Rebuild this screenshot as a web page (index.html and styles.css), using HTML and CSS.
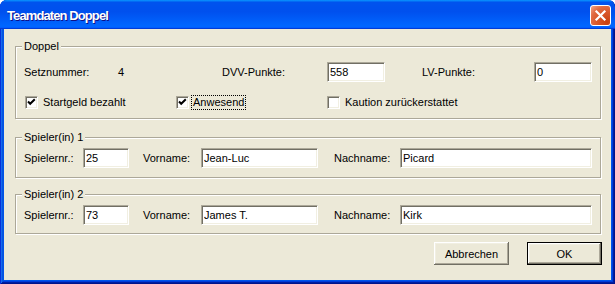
FILE: index.html
```html
<!DOCTYPE html>
<html lang="de">
<head>
<meta charset="utf-8">
<title>Teamdaten Doppel</title>
<link rel="stylesheet" href="styles.css">
</head>
<body>
<div class="window">
  <div class="titlebar">
    <span class="title">Teamdaten Doppel</span>
    <span class="close" aria-label="Schließen">
      <svg viewBox="0 0 21 21" width="21" height="21"><path d="M6.5 6.5 L14.5 14.5 M14.5 6.5 L6.5 14.5" stroke="#fff" stroke-width="2.2" stroke-linecap="square" fill="none"/></svg>
    </span>
  </div>
  <div class="client">
    <fieldset class="group g-doppel">
      <legend>Doppel</legend>
      <div class="row-points">
        <span class="lbl">Setznummer:</span>
        <span class="lbl">4</span>
        <span class="lbl">DVV-Punkte:</span>
        <input class="field w58" type="text" value="558">
        <span class="lbl">LV-Punkte:</span>
        <input class="field w58" type="text" value="0">
      </div>
      <div class="row-checks">
        <label class="check">
          <span class="box"><svg viewBox="0 0 11 11" width="11" height="11"><path d="M2 4.5 L4.2 6.8 L8.8 2.2" stroke="#000" stroke-width="2" fill="none"/></svg></span>
          <span class="text">Startgeld bezahlt</span>
        </label>
        <label class="check">
          <span class="box"><svg viewBox="0 0 11 11" width="11" height="11"><path d="M2 4.5 L4.2 6.8 L8.8 2.2" stroke="#000" stroke-width="2" fill="none"/></svg></span>
          <span class="text focus">Anwesend</span>
        </label>
        <label class="check">
          <span class="box"></span>
          <span class="text">Kaution zurückerstattet</span>
        </label>
      </div>
    </fieldset>

    <fieldset class="group g-p1">
      <legend>Spieler(in) 1</legend>
      <div class="row-player">
        <span class="lbl">Spielernr.:</span>
        <input class="field w46" type="text" value="25">
        <span class="lbl">Vorname:</span>
        <input class="field w117" type="text" value="Jean-Luc">
        <span class="lbl">Nachname:</span>
        <input class="field w192" type="text" value="Picard">
      </div>
    </fieldset>

    <fieldset class="group g-p2">
      <legend>Spieler(in) 2</legend>
      <div class="row-player">
        <span class="lbl">Spielernr.:</span>
        <input class="field w46" type="text" value="73">
        <span class="lbl">Vorname:</span>
        <input class="field w117" type="text" value="James T.">
        <span class="lbl">Nachname:</span>
        <input class="field w192" type="text" value="Kirk">
      </div>
    </fieldset>

    <div class="buttons">
      <button class="btn" type="button">Abbrechen</button>
      <button class="btn btn-default" type="button">OK</button>
    </div>
  </div>
</div>
</body>
</html>
```
FILE: styles.css
```css
* { box-sizing: border-box; }
html, body { margin: 0; padding: 0; }
body {
  width: 615px;
  height: 284px;
  overflow: hidden;
  background: #fff;
  font-family: "Liberation Sans", Arial, sans-serif;
  font-size: 11px;
  color: #000;
}

.window {
  width: 615px;
  height: 284px;
  display: flex;
  flex-direction: column;
  background: #0055EA;
  border-radius: 7px 7px 0 0;
  box-shadow: inset 1px 0 #0831D9, inset -1px -1px #00138C, inset 2px 0 #166AEE, inset -2px -2px #001EA0, inset 3px 0 #0855DD, inset -3px -3px #003BDA;
}

.titlebar {
  height: 29px;
  flex: none;
  display: flex;
  align-items: center;
  justify-content: space-between;
  padding: 2px 4px 0 7px;
  border-radius: 7px 7px 0 0;
  background: linear-gradient(180deg, #0997FF, #0053EE 8%, #0050EE 40%, #0066FF 88%, #0066FF 93%, #005BFF 95%, #003DD7 96%, #003DD7);
}

.title {
  color: #fff;
  font-family: "Liberation Sans", Arial, sans-serif;
  font-weight: bold;
  font-size: 13px;
  letter-spacing: -0.9px;
  line-height: 15px;
  text-shadow: 1px 1px #0F1089;
}

.close {
  width: 21px;
  height: 21px;
  display: flex;
  border: 1px solid #fff;
  border-radius: 3px;
  background: radial-gradient(circle at 85% 85%, #C9410F 0%, #D9582A 45%, #E06B43 70%, #F4A88A 100%);
}
.close svg { margin: -1px; }

.client {
  flex: 1;
  margin: 0 4px 4px 4px;
  background: #ECE9D8;
  display: flex;
  flex-direction: column;
}

.group {
  margin: 0 10px 0 11px;
  padding: 0 8px 6px 8px;
  min-width: 0;
  border: 1px solid #ACA899;
  border-radius: 0;
  box-shadow: inset 1px 1px #fff, 1px 1px #fff;
}
.group legend {
  padding: 0 2px;
  margin-left: -2px;
  line-height: 14px;
  background: #ECE9D8;
}
.g-doppel { margin-top: 10px; padding-bottom: 6px; }
.g-p1 { margin-top: 11px; padding-bottom: 9px; }
.g-p2 { margin-top: 9px; padding-bottom: 8px; }

.lbl { line-height: 13px; white-space: nowrap; }

.row-points {
  margin-top: 9px;
  height: 20px;
  display: grid;
  grid-template-columns: 94px 104px 105px 95px 112px 58px;
  align-items: center;
}

.row-checks {
  margin-top: 10px;
  height: 20px;
  display: grid;
  grid-template-columns: 151px 151px 1fr;
  align-items: center;
}

.row-player {
  margin-top: 4px;
  height: 20px;
  display: grid;
  grid-template-columns: 59px 60px 58px 133px 66px 192px;
  align-items: center;
}

.field {
  height: 20px;
  margin: 0;
  padding: 0 0 0 2px;
  font: inherit;
  color: #000;
  background: #fff;
  border: 1px solid;
  border-color: #ACA899 #fff #fff #ACA899;
  box-shadow: inset 1px 1px #716F64, inset -1px -1px #F1EFE2;
  outline: none;
}
.w46 { width: 46px; }
.w58 { width: 58px; }
.w117 { width: 117px; }
.w192 { width: 192px; }

.check {
  display: flex;
  align-items: center;
  gap: 5px;
}
.box {
  width: 13px;
  height: 13px;
  margin-left: 1px;
  flex: none;
  background: #fff;
  border: 1px solid;
  border-color: #ACA899 #fff #fff #ACA899;
  box-shadow: inset 1px 1px #716F64, inset -1px -1px #F1EFE2;
  display: flex;
}
.box svg { margin: 0; }
.check .text { line-height: 13px; white-space: nowrap; }
.check .focus {
  margin-left: -2px;
  padding: 0 1px;
  outline: 1px dotted #000;
}

.buttons {
  margin-top: 8px;
  padding-right: 9px;
  display: flex;
  justify-content: flex-end;
  gap: 18px;
}
.btn {
  width: 75px;
  height: 23px;
  margin: 0;
  padding: 0;
  font: inherit;
  color: #000;
  background: #ECE9D8;
  border: none;
  box-shadow: inset -1px -1px #716F64, inset 1px 1px #fff, inset -2px -2px #ACA899, inset 2px 2px #F1EFE2;
}
.btn-default {
  box-shadow: inset 0 0 0 1px #000, inset -2px -2px #716F64, inset 2px 2px #fff, inset -3px -3px #ACA899, inset 3px 3px #F1EFE2;
}
```
